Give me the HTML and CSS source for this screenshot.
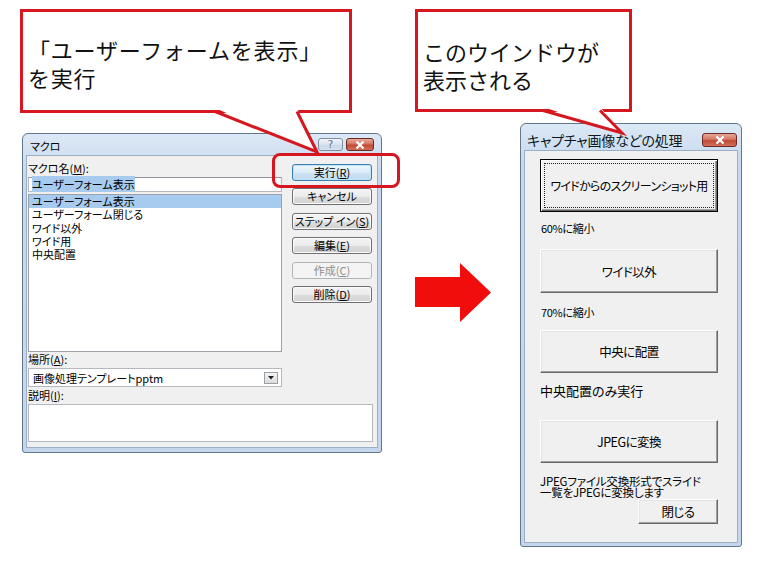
FILE: index.html
```html
<!DOCTYPE html>
<html lang="ja">
<head>
    <meta charset="UTF-8">
    <title>ユーザーフォームを表示</title>
    <link rel="stylesheet" href="styles.css">
</head>
<body>
  <div class="page">
    <section class="panel-left">
      <div class="callout callout-left">
        <p>「ユーザーフォームを表示」<br>を実行</p>
        <svg class="tail" width="332" height="150" viewBox="0 0 332 150">
          <polygon points="195,99 277,99 297,143" fill="#fff"/>
          <polyline points="195,102.5 297,143 277,102.5" fill="none" stroke="#d7171f" stroke-width="3" stroke-linejoin="miter"/>
        </svg>
      </div>

      <div class="win macro">
        <div class="titlebar">
          <span class="title">マクロ</span>
          <div class="caption-btns">
            <span class="cap help">?</span>
            <span class="cap close">
              <svg width="10" height="8" viewBox="0 0 10 8"><path d="M1.5 0.5 L8.5 7.5 M8.5 0.5 L1.5 7.5" stroke="#fff" stroke-width="2.2"/></svg>
            </span>
          </div>
        </div>
        <div class="client macro-client">
          <div class="macro-main">
            <div class="macro-fields">
              <div class="lbl">マクロ名(<u>M</u>):</div>
              <div class="name-input"><span class="sel">ユーザーフォーム表示</span></div>
              <ul class="listbox">
                <li class="selected">ユーザーフォーム表示</li>
                <li>ユーザーフォーム閉じる</li>
                <li>ワイド以外</li>
                <li>ワイド用</li>
                <li>中央配置</li>
              </ul>
              <div class="lbl lbl-place">場所(<u>A</u>):</div>
              <div class="combo">
                <span>画像処理テンプレートpptm</span>
                <span class="drop">
                  <svg width="6" height="4" viewBox="0 0 6 4"><path d="M0 0 H6 L3 3.5 Z" fill="#222"/></svg>
                </span>
              </div>
            </div>
            <div class="macro-buttons">
              <div class="btn btn-default">実行(<u>R</u>)</div>
              <div class="btn">キャンセル</div>
              <div class="btn">ステップ イン(<u>S</u>)</div>
              <div class="btn">編集(<u>E</u>)</div>
              <div class="btn btn-disabled">作成(<u>C</u>)</div>
              <div class="btn">削除(<u>D</u>)</div>
            </div>
          </div>
          <div class="lbl lbl-desc">説明(<u>I</u>):</div>
          <div class="memo"></div>
        </div>
        <div class="highlight"></div>
      </div>
    </section>

    <section class="panel-right">
      <div class="callout callout-right">
        <p>このウインドウが<br>表示される</p>
        <svg class="tail" width="217" height="130" viewBox="0 0 217 130">
          <polygon points="128,98 185,98 207,124" fill="#fff"/>
          <polyline points="128,101.5 207,124 185,101.5" fill="none" stroke="#d7171f" stroke-width="3" stroke-linejoin="miter"/>
        </svg>
      </div>

      <div class="right-row">
        <svg class="arrow" width="76" height="59" viewBox="0 0 76 59">
          <polygon points="0,14 45,14 45,0 76,29.5 45,59 45,44 0,44" fill="#f20d0d"/>
        </svg>

        <div class="win capture">
          <div class="titlebar capture-bar">
            <span class="title capture-title">キャプチャ画像などの処理</span>
            <span class="cap close close-wide">
              <svg width="10" height="8" viewBox="0 0 10 8"><path d="M1.5 0.5 L8.5 7.5 M8.5 0.5 L1.5 7.5" stroke="#fff" stroke-width="2.2"/></svg>
            </span>
          </div>
          <div class="client capture-client">
            <div class="vbtn vbtn-focus vbtn-first">ワイドからのスクリーンショット用</div>
            <div class="note-sm note-60">60%に縮小</div>
            <div class="vbtn vbtn-second">ワイド以外</div>
            <div class="note-sm note-70">70%に縮小</div>
            <div class="vbtn vbtn-third">中央に配置</div>
            <div class="note-md">中央配置のみ実行</div>
            <div class="vbtn vbtn-fourth">JPEGに変換</div>
            <div class="note-two">JPEGファイル交換形式でスライド<br>一覧をJPEGに変換します</div>
            <div class="vbtn vbtn-close">閉じる</div>
          </div>
        </div>
      </div>
    </section>
  </div>
</body>
</html>
```

FILE: styles.css
```css
body {
    margin: 0;
    background-color: #ffffff;
    font-family: "Noto Sans CJK JP", "Noto Sans", sans-serif;
    color: #000000;
}
.page {
    display: flex;
    gap: 33px;
    padding-left: 20px;
}

/* callouts */
.callout {
    position: relative;
    z-index: 2;
    box-sizing: border-box;
    border: 3px solid #d7171f;
    background-color: #ffffff;
}
.callout p {
    margin: 0;
    padding: 23px 0 0 5px;
    font-size: 22px;
    line-height: 28px;
    color: #111111;
}
.callout-left p {
    letter-spacing: 0.8px;
}
.callout .tail {
    position: absolute;
    left: -3px;
    top: -3px;
    overflow: visible;
}
.callout-left {
    width: 332px;
    height: 104px;
}
.callout-right {
    width: 217px;
    height: 103px;
}
.callout-right p {
    padding-top: 25px;
}

.panel-left {
    width: 362px;
    padding-top: 9px;
}
.panel-right {
    padding-top: 9px;
}
.right-row {
    display: flex;
    align-items: flex-start;
    margin-top: 11px;
}
.arrow {
    margin-top: 140px;
    flex-shrink: 0;
}

/* window frame */
.win {
    position: relative;
    box-sizing: border-box;
    border: 1px solid #62768c;
    border-radius: 6px 6px 3px 3px;
    background: linear-gradient(#dce8f5, #c6d9ee 40px, #c3d6eb);
    display: flex;
    flex-direction: column;
}
.titlebar {
    display: flex;
    justify-content: space-between;
    align-items: flex-start;
    flex-shrink: 0;
}
.title {
    font-size: 11px;
    line-height: 14px;
    font-feature-settings: "palt";
}
.caption-btns {
    display: flex;
    gap: 3px;
}
.cap {
    box-sizing: border-box;
    height: 13px;
    border-radius: 3px;
    display: flex;
    align-items: center;
    justify-content: center;
}
.help {
    width: 25px;
    border: 1px solid #7f90a4;
    background: linear-gradient(#f1f5fa, #d9e3ee 50%, #cbd8e6 51%, #d4e0ed);
    color: #6a7889;
    font-size: 11px;
    line-height: 11px;
    font-family: "DejaVu Sans", sans-serif;
}
.close {
    width: 28px;
    border: 1px solid #6b2b24;
    background: linear-gradient(#e9a99b, #d27563 45%, #c24a36 55%, #d2705a);
}
.client {
    box-sizing: border-box;
    background-color: #f0f0f0;
    border: 1px solid #9aaec4;
}

/* macro dialog */
.macro {
    width: 360px;
    height: 320px;
    margin: 20px 0 0 2px;
    padding: 0 3px 4px 3px;
}
.macro .titlebar {
    height: 21px;
    padding: 4px 4px 0 4px;
    box-sizing: border-box;
}
.macro .title {
    padding-top: 1px;
}
.macro-client {
    height: 293px;
    padding: 6px 4px 0 1px;
    font-size: 11px;
    font-feature-settings: "palt";
}
.macro-main {
    display: flex;
}
.macro-fields {
    width: 254px;
}
.lbl {
    line-height: 13px;
    height: 14px;
}
.lbl u, .btn u {
    text-decoration-thickness: 1px;
    text-underline-offset: 1px;
}
.name-input {
    box-sizing: border-box;
    height: 15px;
    margin-top: 1px;
    border: 1px solid #b5b8be;
    border-top-color: #8e9198;
    background-color: #ffffff;
    padding-left: 3px;
    line-height: 13px;
}
.sel {
    background-color: #a6cbef;
}
.listbox {
    box-sizing: border-box;
    list-style: none;
    margin: 2px 0 0 0;
    padding: 0;
    height: 158px;
    border: 1px solid #9da1a8;
    background-color: #ffffff;
}
.listbox li {
    line-height: 13.3px;
    padding-left: 3px;
}
.listbox li.selected {
    background-color: #a6cbef;
}
.lbl-place {
    margin-top: 1px;
}
.combo {
    box-sizing: border-box;
    height: 19px;
    margin-top: 1px;
    border: 1px solid #b5b8be;
    background-color: #ffffff;
    display: flex;
    align-items: center;
    justify-content: space-between;
    padding: 0 3px 0 4px;
}
.drop {
    box-sizing: border-box;
    width: 14px;
    height: 12px;
    border: 1px solid #9aa0a8;
    background: linear-gradient(#f4f4f4, #dcdcdc);
    display: flex;
    align-items: center;
    justify-content: center;
}
.macro-buttons {
    width: 80px;
    margin-left: 10px;
    padding-top: 2px;
    display: flex;
    flex-direction: column;
    gap: 7.4px;
}
.btn {
    box-sizing: border-box;
    height: 17px;
    border: 1px solid #707070;
    border-radius: 3px;
    background: linear-gradient(#f4f4f4, #ebebeb 50%, #dddddd 51%, #d2d2d2);
    box-shadow: inset 0 0 0 1px #fbfbfb;
    text-align: center;
    line-height: 14px;
    white-space: nowrap;
}
.btn-default {
    border-color: #3c7fb1;
    background: linear-gradient(#eef6fc, #dcecf8 50%, #cde3f5 51%, #c3dcf1);
    box-shadow: inset 0 0 0 1px #bfe3f7;
}
.btn-disabled {
    border-color: #b2b6b9;
    background: #f4f4f4;
    box-shadow: none;
    color: #8d8d8d;
}
.lbl-desc {
    margin-top: 2px;
}
.memo {
    box-sizing: border-box;
    width: 345px;
    height: 38px;
    margin-top: 1px;
    border: 1px solid #b5b8be;
    background-color: #ffffff;
}
.highlight {
    position: absolute;
    left: 249px;
    top: 19px;
    width: 128px;
    height: 35px;
    box-sizing: border-box;
    border: 3px solid #d7171f;
    border-radius: 8px;
    z-index: 3;
}

/* capture form */
.capture {
    width: 222px;
    height: 424px;
    margin-left: 29px;
    padding: 0 3px 3px 3px;
}
.capture-bar {
    height: 26px;
    padding: 8px 1px 0 3px;
    box-sizing: border-box;
}
.capture-title {
    font-size: 14px;
    line-height: 16px;
    letter-spacing: -0.2px;
    color: #101820;
}
.close-wide {
    width: 35px;
    height: 14px;
    margin-top: 1px;
}
.capture-client {
    height: 393px;
    padding: 8px 19px 0 15px;
    display: flex;
    flex-direction: column;
    font-feature-settings: "palt";
}
.vbtn {
    box-sizing: border-box;
    background-color: #f0f0f0;
    border: 1px solid;
    border-color: #ffffff #696969 #696969 #ffffff;
    box-shadow: inset -1px -1px 0 #a0a0a0, inset 1px 1px 0 #e3e3e3;
    display: flex;
    align-items: center;
    justify-content: center;
    font-size: 12.5px;
    letter-spacing: -0.5px;
    white-space: nowrap;
    flex-shrink: 0;
}
.vbtn-focus {
    border: 1px solid #000000;
    box-shadow: inset 1px 1px 0 #ffffff, inset -1px -1px 0 #696969, inset -2px -2px 0 #a0a0a0;
    outline: 1px dotted #222222;
    outline-offset: -5px;
}
.vbtn-first {
    height: 53px;
    font-size: 12px;
    letter-spacing: -0.7px;
}
.vbtn-second {
    height: 44px;
    margin-top: 14px;
}
.vbtn-third {
    height: 43px;
    margin-top: 11px;
}
.vbtn-fourth {
    height: 43px;
    margin-top: 21px;
}
.vbtn-close {
    width: 80px;
    height: 25px;
    margin-top: 1px;
    align-self: flex-end;
}
.note-sm {
    font-size: 11px;
    line-height: 14px;
    letter-spacing: -0.3px;
    padding-left: 1px;
}
.note-60 {
    margin-top: 9px;
}
.note-70 {
    margin-top: 12px;
}
.note-md {
    font-size: 13px;
    line-height: 16px;
    margin-top: 10px;
}
.note-two {
    font-size: 11.5px;
    line-height: 11px;
    margin-top: 13px;
    letter-spacing: -0.2px;
}
```
